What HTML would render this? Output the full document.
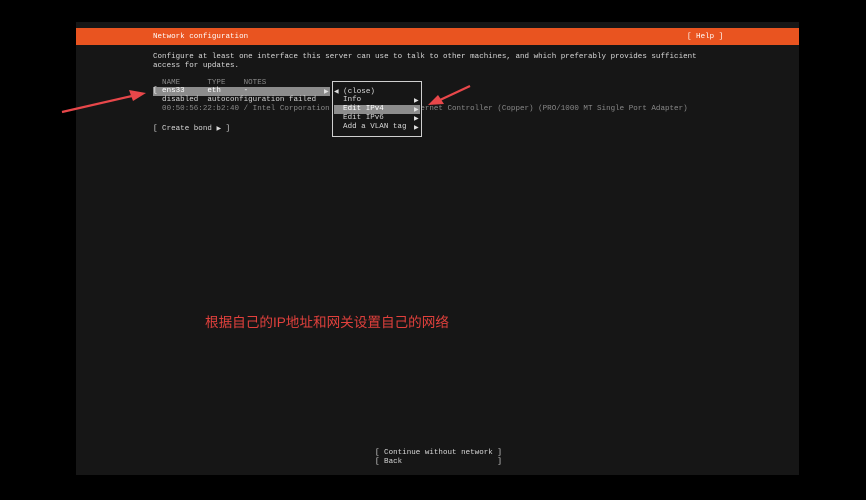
<!DOCTYPE html>
<html><head><meta charset="utf-8"><style>
body{margin:0;width:866px;height:500px;background:#000;overflow:hidden;position:relative}
.term{position:absolute;left:76px;top:22px;width:723px;height:453px;background:#161616}
.bar{position:absolute;left:76px;top:28px;width:723px;height:17px;background:#e95420}
.t{position:absolute;font-family:"Liberation Mono",monospace;font-size:7.5px;letter-spacing:0.03px;color:#dadada;white-space:pre;line-height:9px}
.g{color:#8a8a8a}
.sel{background:#8c8c8c;color:#fff}
.menu{position:absolute;left:332px;top:81px;width:88px;height:54px;border:1px solid #cfcfcf;background:#161616}
.cn{position:absolute;left:205px;top:311px;font-family:"Liberation Sans","Noto Sans CJK SC",sans-serif;font-size:13.6px;color:#e0403c;white-space:nowrap}
.ar{position:absolute;font-family:"DejaVu Sans",sans-serif;font-size:6px;color:#e0e0e0;line-height:9px}
</style></head><body>
<div class="term"></div>
<div class="bar"></div>
<div class="t" style="left:153px;top:33px;color:#fff">Network configuration</div>
<div class="t" style="left:687px;top:33px;color:#fff">[ Help ]</div>
<div class="t" style="left:153px;top:53px">Configure at least one interface this server can use to talk to other machines, and which preferably provides sufficient
access for updates.</div>
<div class="t g" style="left:153px;top:79px">  NAME      TYPE    NOTES</div>
<div class="t sel" style="left:153px;top:87px;width:177px;height:9px">[ ens33     eth     -</div>
<div class="ar" style="left:324px;top:87px">▶</div>
<div class="t" style="left:153px;top:96px">  disabled  autoconfiguration failed</div>
<div class="t g" style="left:153px;top:105px">  00:50:56:22:b2:40 / Intel Corporation 82545EM Gigabit Ethernet Controller (Copper) (PRO/1000 MT Single Port Adapter)</div>
<div class="t" style="left:153px;top:124px">[ Create bond <span style="font-family:'DejaVu Sans';font-size:6px">▶</span> ]</div>
<div class="menu"></div>
<div class="t" style="left:334px;top:87px"><span style="font-family:'DejaVu Sans';font-size:6px">◀</span> (close)</div>
<div class="t" style="left:334px;top:96px;width:86px">  Info</div>
<div class="t sel" style="left:334px;top:105px;width:86px">  Edit IPv4</div>
<div class="t" style="left:334px;top:114px;width:86px">  Edit IPv6</div>
<div class="t" style="left:334px;top:123px;width:86px">  Add a VLAN tag</div>
<div class="ar" style="left:414px;top:96px">▶</div>
<div class="ar" style="left:414px;top:105px">▶</div>
<div class="ar" style="left:414px;top:114px">▶</div>
<div class="ar" style="left:414px;top:123px">▶</div>
<div class="t" style="left:375px;top:449px">[ Continue without network ]
[ Back                     ]</div>
<div class="cn">根据自己的IP地址和网关设置自己的网络</div>
<svg style="position:absolute;left:0;top:0" width="866" height="500">
<path d="M62 112 L132 96" stroke="#e8474a" stroke-width="2.2" fill="none"/>
<path d="M146 93 L129 90 L133 101 Z" fill="#e8474a"/>
<path d="M470 86 L440 100" stroke="#e8474a" stroke-width="2.2" fill="none"/>
<path d="M428 105 L438 95 L444 104 Z" fill="#e8474a"/>
</svg>
</body></html>
